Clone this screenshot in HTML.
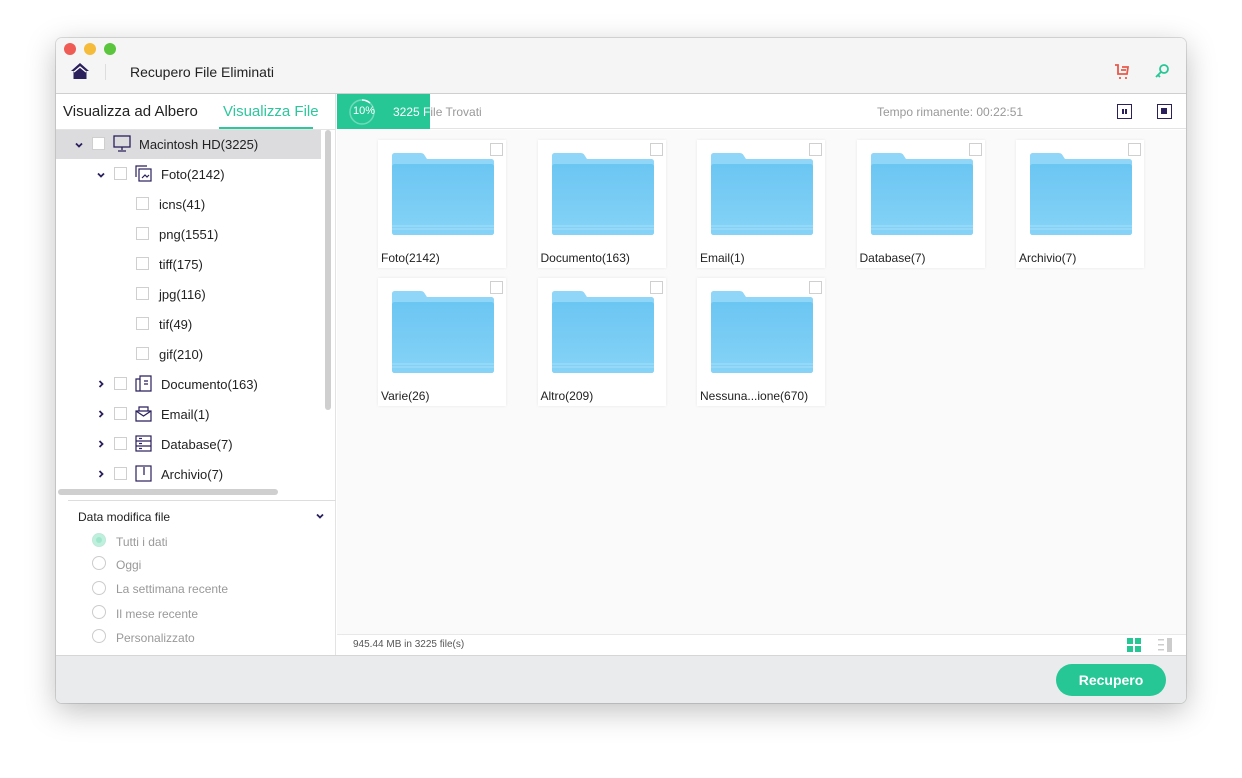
<!DOCTYPE html>
<html><head><meta charset="utf-8"><style>
*{box-sizing:border-box;margin:0;padding:0}
body{width:1242px;height:778px;background:#fff;font-family:"Liberation Sans",sans-serif;position:relative;overflow:hidden}
.win{position:absolute;left:56px;top:38px;width:1130px;height:665px;border-radius:6px;background:#fff;box-shadow:0 8px 30px rgba(0,0,0,.25),0 0 0 1px rgba(0,0,0,.12);overflow:hidden}
.title{position:absolute;left:0;top:0;width:100%;height:56px;background:#f5f5f6;border-bottom:1px solid #cfcfcf}
.dot{position:absolute;top:5px;width:12px;height:12px;border-radius:50%}
.abs{position:absolute}
.t{position:absolute;white-space:nowrap;font-size:13px;color:#222}
.cb{position:absolute;width:13px;height:13px;border:1px solid #cfcfcf;background:#fff}
.card{position:absolute;width:128px;height:128px;background:#fff;box-shadow:0 0 3px rgba(0,0,0,.08)}
.card .cb{right:3px;top:3px;left:auto}
.card .lbl{position:absolute;left:3px;top:111px;font-size:12px;color:#222;white-space:nowrap}
.radio{position:absolute;left:36px;width:14px;height:14px;border:1px solid #ccc;border-radius:50%}
.rl{position:absolute;left:60px;font-size:12px;color:#999}
.dn,.rt{position:absolute;width:8px;height:8px}
</style></head><body>
<svg width="0" height="0" style="position:absolute"><defs>
<symbol id="dn" viewBox="0 0 8 8"><path d="M1 2.5l3 3 3-3" stroke="#2b1f5c" stroke-width="1.8" fill="none"/></symbol>
<symbol id="rt" viewBox="0 0 8 8"><path d="M2.5 1l3 3-3 3" stroke="#2b1f5c" stroke-width="1.8" fill="none"/></symbol>
<linearGradient id="fg" x1="0" y1="0" x2="0" y2="1"><stop offset="0" stop-color="#6bc6f2"/><stop offset="1" stop-color="#86d3f7"/></linearGradient>
<symbol id="fold" viewBox="0 0 102 82"><path d="M3 0h25c3 0 4 1 5 3l2 3h64c2 0 3 1 3 3v70c0 2-1 3-3 3H3c-2 0-3-1-3-3V3c0-2 1-3 3-3z" fill="#8fd6f8"/><path d="M3 11h96c2 0 3 1 3 3v65c0 2-1 3-3 3H3c-2 0-3-1-3-3V14c0-2 1-3 3-3z" fill="url(#fg)"/><path d="M0 73h102M0 76h102" stroke="#a9def7" stroke-width="1"/></symbol></defs></svg>
<div class="win">
<div class="title">
<div class="dot" style="left:8px;background:#ee5c55"></div>
<div class="dot" style="left:28px;background:#f5bb3b"></div>
<div class="dot" style="left:48px;background:#5bc53d"></div>
<svg class="abs" style="left:15px;top:25px" width="18" height="16" viewBox="0 0 18 16"><path d="M9 0L0 8h2.5v8h13V8H18z" fill="#2b1f5c"/><path d="M3 9L9 4l6 5" stroke="#fff" stroke-width="1.3" fill="none"/></svg>
<div class="abs" style="left:49px;top:26px;width:1px;height:16px;background:#ddd"></div>
<div class="t" style="left:74px;top:26px;font-size:14px">Recupero File Eliminati</div>
<svg class="abs" style="left:1058px;top:25px" width="16" height="16" viewBox="0 0 16 16" fill="none" stroke="#e8594a" stroke-width="1.8"><path d="M1 2h3v9h9l1-7H8M7 7h5"/><path d="M5 15h2M11 15h2"/></svg>
<svg class="abs" style="left:1098px;top:25px" width="16" height="16" viewBox="0 0 16 16" fill="none" stroke="#26c795" stroke-width="1.8"><circle cx="10" cy="6" r="4"/><path d="M7 9L2 14M4 12l2 2"/></svg>
</div>
<div class="abs" style="left:0;top:56px;width:280px;height:561px;background:#fff;border-right:1px solid #e3e3e3"></div>
<div class="t" style="left:7px;top:65px;font-size:15px">Visualizza ad Albero</div>
<div class="t" style="left:167px;top:65px;font-size:15px;color:#2dc79b">Visualizza File</div>
<div class="abs" style="left:163px;top:89px;width:94px;height:2px;background:#2dc79b"></div>
<div class="abs" style="left:0;top:91px;width:280px;height:1px;background:#e3e3e3"></div>
<div class="abs" style="left:0;top:92px;width:265px;height:29px;background:#dcdcdf"></div>
<svg class="dn" style="left:19px;top:103px"><use href="#dn"/></svg>
<div class="cb" style="left:36px;top:99px"></div>
<svg class="abs" style="left:57px;top:97px" width="18" height="17" viewBox="0 0 18 17" fill="none" stroke="#2b1f5c" stroke-width="1.3"><rect x="1" y="1" width="16" height="11"/><path d="M9 12v3M5 16h8"/></svg>
<div class="t" style="left:83px;top:99px">Macintosh HD(3225)</div>
<svg class="dn" style="left:41px;top:133px"><use href="#dn"/></svg>
<div class="cb" style="left:58px;top:129px"></div>
<svg class="abs" style="left:79px;top:127px" width="17" height="17" viewBox="0 0 17 17" fill="none" stroke="#2b1f5c" stroke-width="1.2"><path d="M1 12V1h11"/><rect x="4" y="4" width="12" height="12"/><path d="M7 13l3-3 2 2 2-2"/></svg>
<div class="t" style="left:105px;top:129px">Foto(2142)</div>
<div class="cb" style="left:80px;top:159px"></div><div class="t" style="left:103px;top:159px">icns(41)</div>
<div class="cb" style="left:80px;top:189px"></div><div class="t" style="left:103px;top:189px">png(1551)</div>
<div class="cb" style="left:80px;top:219px"></div><div class="t" style="left:103px;top:219px">tiff(175)</div>
<div class="cb" style="left:80px;top:249px"></div><div class="t" style="left:103px;top:249px">jpg(116)</div>
<div class="cb" style="left:80px;top:279px"></div><div class="t" style="left:103px;top:279px">tif(49)</div>
<div class="cb" style="left:80px;top:309px"></div><div class="t" style="left:103px;top:309px">gif(210)</div>
<svg class="rt" style="left:41px;top:342px"><use href="#rt"/></svg><div class="cb" style="left:58px;top:339px"></div>
<svg class="abs" style="left:79px;top:337px" width="17" height="17" viewBox="0 0 17 17" fill="none" stroke="#2b1f5c" stroke-width="1.2"><path d="M1 4h4V1h11v15H1z"/><path d="M5 4v12M9 6h4M9 9h4"/></svg>
<div class="t" style="left:105px;top:339px">Documento(163)</div>
<svg class="rt" style="left:41px;top:372px"><use href="#rt"/></svg><div class="cb" style="left:58px;top:369px"></div>
<svg class="abs" style="left:79px;top:367px" width="17" height="17" viewBox="0 0 17 17" fill="none" stroke="#2b1f5c" stroke-width="1.2"><path d="M1 6h15v10H1z"/><path d="M1 6l7.5 5L16 6M4 6V2h9v4"/></svg>
<div class="t" style="left:105px;top:369px">Email(1)</div>
<svg class="rt" style="left:41px;top:402px"><use href="#rt"/></svg><div class="cb" style="left:58px;top:399px"></div>
<svg class="abs" style="left:79px;top:397px" width="17" height="17" viewBox="0 0 17 17" fill="none" stroke="#2b1f5c" stroke-width="1.2"><rect x="1" y="1" width="15" height="15"/><path d="M1 6h15M1 11h15M4 3.5h3M4 8.5h3M4 13.5h3"/></svg>
<div class="t" style="left:105px;top:399px">Database(7)</div>
<svg class="rt" style="left:41px;top:432px"><use href="#rt"/></svg><div class="cb" style="left:58px;top:429px"></div>
<svg class="abs" style="left:79px;top:427px" width="17" height="17" viewBox="0 0 17 17" fill="none" stroke="#2b1f5c" stroke-width="1.2"><rect x="1" y="1" width="15" height="15"/><path d="M8 3h2M8 5h2M8 7h2M8 9h2"/></svg>
<div class="t" style="left:105px;top:429px">Archivio(7)</div>
<div class="abs" style="left:269px;top:92px;width:6px;height:280px;border-radius:3px;background:#cfcfcf"></div>
<div class="abs" style="left:2px;top:451px;width:220px;height:6px;border-radius:3px;background:#cfcfcf"></div>
<div class="abs" style="left:12px;top:462px;width:268px;height:1px;background:#ddd"></div>
<div class="t" style="left:22px;top:472px;font-size:12px">Data modifica file</div>
<svg class="dn" style="left:260px;top:474px"><use href="#dn"/></svg>
<div class="radio" style="top:495px;background:#bff0de;border-color:#bfe8da"><div style="position:absolute;left:3px;top:3px;width:6px;height:6px;border-radius:50%;background:#9fe6cc"></div></div><div class="rl" style="top:497px">Tutti i dati</div>
<div class="radio" style="top:518px"></div><div class="rl" style="top:520px">Oggi</div>
<div class="radio" style="top:543px"></div><div class="rl" style="top:544px">La settimana recente</div>
<div class="radio" style="top:567px"></div><div class="rl" style="top:569px">Il mese recente</div>
<div class="radio" style="top:591px"></div><div class="rl" style="top:593px">Personalizzato</div>
<div class="abs" style="left:281px;top:56px;width:849px;height:35px;background:#fff;border-bottom:1px solid #e3e3e3"></div>
<div class="abs" style="left:281px;top:56px;width:93px;height:35px;background:#26c795"></div>
<svg class="abs" style="left:292px;top:60px" width="28" height="28" viewBox="0 0 28 28"><circle cx="14" cy="14" r="12" stroke="rgba(255,255,255,.35)" stroke-width="1.5" fill="none"/><path d="M14 2a12 12 0 0 1 8 3" stroke="#fff" stroke-width="1.5" fill="none"/></svg>
<div class="t" style="left:297px;top:67px;font-size:11px;color:#fff">10%</div>
<div class="t" style="left:337px;top:67px;font-size:12px;color:#fff">3225 F<span style="color:#999">ile Trovati</span></div>
<div class="t" style="left:821px;top:67px;font-size:12px;color:#999">Tempo rimanente: 00:22:51</div>
<div class="abs" style="left:1061px;top:66px;width:15px;height:15px;border:1.5px solid #2b1f5c"><div style="position:absolute;left:3.5px;top:3.5px;width:2px;height:5px;background:#2b1f5c"></div><div style="position:absolute;left:7px;top:3.5px;width:2px;height:5px;background:#2b1f5c"></div></div>
<div class="abs" style="left:1101px;top:66px;width:15px;height:15px;border:1.5px solid #2b1f5c"><div style="position:absolute;left:3px;top:3px;width:6px;height:6px;background:#2b1f5c"></div></div>
<div class="abs" style="left:281px;top:92px;width:849px;height:505px;background:#fafafa"></div>
<div class="abs" style="left:281px;top:596px;width:849px;height:21px;background:#fff;border-top:1px solid #e8e8e8"></div>
<div class="t" style="left:297px;top:601px;font-size:10px;color:#555">945.44 MB in 3225 file(s)</div>
<svg class="abs" style="left:1071px;top:600px" width="14" height="14"><rect x="0" y="0" width="6" height="6" fill="#26c795"/><rect x="8" y="0" width="6" height="6" fill="#26c795"/><rect x="0" y="8" width="6" height="6" fill="#26c795"/><rect x="8" y="8" width="6" height="6" fill="#26c795"/></svg>
<svg class="abs" style="left:1102px;top:600px" width="15" height="14" fill="#ccc"><rect x="0" y="1" width="6" height="1.5"/><rect x="0" y="6" width="6" height="1.5"/><rect x="0" y="11" width="6" height="1.5"/><rect x="9" y="0" width="5" height="14"/></svg>
<div class="abs" style="left:0;top:617px;width:1130px;height:48px;background:#e9ebed;border-top:1px solid #d6d6d6"></div>
<div class="abs" style="left:1000px;top:626px;width:110px;height:32px;border-radius:16px;background:#26c795;color:#fff;font-weight:bold;font-size:14px;text-align:center;line-height:32px">Recupero</div>
</div>
<div id="cards"></div>
<script>
var L=["Foto(2142)","Documento(163)","Email(1)","Database(7)","Archivio(7)","Varie(26)","Altro(209)","Nessuna...ione(670)"],h="";
L.forEach(function(n,i){var x=378+(i%5)*159.5,y=140+Math.floor(i/5)*138;
h+='<div class="card" style="left:'+x+'px;top:'+y+'px"><div class="cb"></div><svg style="position:absolute;left:14px;top:13px" width="102" height="82"><use href="#fold"/></svg><div class="lbl">'+n+'</div></div>';});
document.getElementById("cards").innerHTML=h;
</script>
</body></html>
